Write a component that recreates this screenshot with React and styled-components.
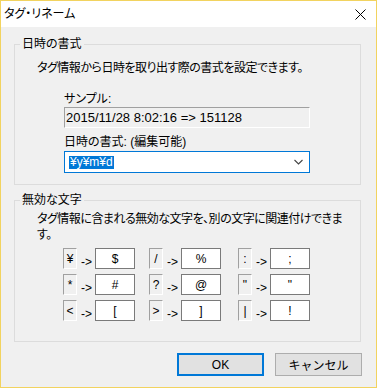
import React from 'react';
import styled, { createGlobalStyle } from 'styled-components';

const GlobalStyle = createGlobalStyle`
    html, body {
        margin: 0;
        padding: 0;
        background: #ffffff;
    }
    body {
        font-family: "Liberation Sans", "Noto Sans CJK JP", sans-serif;
        font-size: 12px;
        color: #000000;
        font-feature-settings: "palt" 1;
    }
`;

const Window = styled.div`
    width: 377px;
    height: 388px;
    box-sizing: border-box;
    border: 1px solid #f2d35f;
    background: #f0f0f0;
    display: flex;
    flex-direction: column;
`;

const TitleBar = styled.div`
    height: 26px;
    background: #ffffff;
    display: flex;
    align-items: center;
    justify-content: space-between;
    padding: 0 10px 0 3px;
    flex-shrink: 0;
`;

const Title = styled.span`
    font-size: 12px;
    line-height: 16px;
    margin-top: -1px;
`;

const Body = styled.div`
    flex: 1;
    padding: 17px 14px 0 13px;
    display: flex;
    flex-direction: column;
`;

const Group = styled.div`
    position: relative;
    width: 347px;
    height: ${(p) => p.$height}px;
    box-sizing: border-box;
    border: 1px solid #dcdcdc;
    padding-top: ${(p) => p.$padTop}px;
    margin-bottom: ${(p) => p.$gap || 0}px;
    display: flex;
    flex-direction: column;
`;

// legend sits over the frame line
const Legend = styled.span`
    position: absolute;
    top: -9px;
    left: 5px;
    padding: 0 2px;
    line-height: 16px;
    background: #f0f0f0;
`;

const Text = styled.div`
    line-height: 16px;
    margin-left: ${(p) => p.$indent}px;
    margin-top: ${(p) => p.$top || 0}px;
    letter-spacing: ${(p) => (p.$tight ? '-0.5px' : '0')};
    white-space: nowrap;
`;

const SampleBox = styled.div`
    width: 246px;
    height: 21px;
    box-sizing: border-box;
    margin-left: 49px;
    border-top: 1px solid #a0a0a0;
    border-left: 1px solid #a0a0a0;
    border-right: 1px solid #ffffff;
    border-bottom: 1px solid #ffffff;
    font-size: 13px;
    line-height: 19px;
    padding-left: 1px;
`;

const Combo = styled.div`
    width: 246px;
    height: 22px;
    box-sizing: border-box;
    margin-left: 49px;
    margin-top: 1px;
    border: 1px solid #0078d7;
    background: #ffffff;
    display: flex;
    align-items: center;
    justify-content: space-between;
    padding: 0 6px 0 4px;
`;

const Selected = styled.span`
    background: #0078d7;
    color: #ffffff;
    line-height: 13px;
    height: 13px;
    padding: 0 1px;
`;

const Grid = styled.div`
    display: grid;
    grid-template-columns: 86px 89px auto;
    grid-auto-rows: 21px;
    row-gap: 5px;
    margin: 5px 0 0 48px;
`;

const Pair = styled.div`
    display: flex;
    align-items: stretch;
`;

const CharBox = styled.div`
    width: 14px;
    box-sizing: border-box;
    border-top: 1px solid #a0a0a0;
    border-left: 1px solid #a0a0a0;
    border-right: 1px solid #ffffff;
    border-bottom: 1px solid #ffffff;
    display: flex;
    align-items: center;
    justify-content: center;
    font-size: 12px;
`;

const Arrow = styled.span`
    align-self: flex-end;
    width: 13px;
    margin: 0 1px 0 4px;
    line-height: 13px;
    font-size: 12px;
`;

const Field = styled.div`
    width: 40px;
    box-sizing: border-box;
    border: 1px solid #7a7a7a;
    background: #ffffff;
    display: flex;
    align-items: center;
    justify-content: center;
    font-size: 12px;
`;

const ButtonRow = styled.div`
    display: flex;
    justify-content: flex-end;
    gap: 11px;
    margin-top: 11px;
`;

const Button = styled.button`
    width: 87px;
    height: 23px;
    box-sizing: border-box;
    border: ${(p) => (p.$primary ? '2px solid #0078d7' : '1px solid #adadad')};
    background: #e1e1e1;
    font-family: inherit;
    font-size: 12px;
    color: #000000;
    padding: 0;
    margin: 0;
`;

const pairs = [
    ['¥', '$'], ['/', '%'], [':', ';'],
    ['*', '#'], ['?', '@'], ['"', '"'],
    ['<', '['], ['>', ']'], ['|', '!'],
];

const CloseIcon = () => (
    <svg width="11" height="11" viewBox="0 0 11 11">
        <path d="M0.5 0.5 L10.5 10.5 M10.5 0.5 L0.5 10.5" stroke="#000" strokeWidth="1" fill="none" />
    </svg>
);

const Chevron = () => (
    <svg width="9" height="6" viewBox="0 0 9 6">
        <polyline points="0.5,1 4.5,5 8.5,1" stroke="#444" strokeWidth="1.1" fill="none" />
    </svg>
);

export default function App() {
    return (
        <>
            <GlobalStyle />
            <Window>
                <TitleBar>
                    <Title>タグ・リネーム</Title>
                    <CloseIcon />
                </TitleBar>
                <Body>
                    <Group $height={141} $padTop={15} $gap={15}>
                        <Legend>日時の書式</Legend>
                        <Text $indent={22} $tight>タグ情報から日時を取り出す際の書式を設定できます。</Text>
                        <Text $indent={49} $top={15}>サンプル:</Text>
                        <SampleBox>2015/11/28 8:02:16 =&gt; 151128</SampleBox>
                        <Text $indent={49} $top={6}>日時の書式: (編集可能)</Text>
                        <Combo>
                            <Selected>¥y¥m¥d</Selected>
                            <Chevron />
                        </Combo>
                    </Group>
                    <Group $height={142} $padTop={10}>
                        <Legend>無効な文字</Legend>
                        <Text $indent={22} $tight>
                            タグ情報に含まれる無効な文字を、別の文字に関連付けできま
                            <br />
                            す。
                        </Text>
                        <Grid>
                            {pairs.map(([from, to], i) => (
                                <Pair key={i}>
                                    <CharBox>{from}</CharBox>
                                    <Arrow>-&gt;</Arrow>
                                    <Field>{to}</Field>
                                </Pair>
                            ))}
                        </Grid>
                    </Group>
                    <ButtonRow>
                        <Button $primary>OK</Button>
                        <Button>キャンセル</Button>
                    </ButtonRow>
                </Body>
            </Window>
        </>
    );
}
